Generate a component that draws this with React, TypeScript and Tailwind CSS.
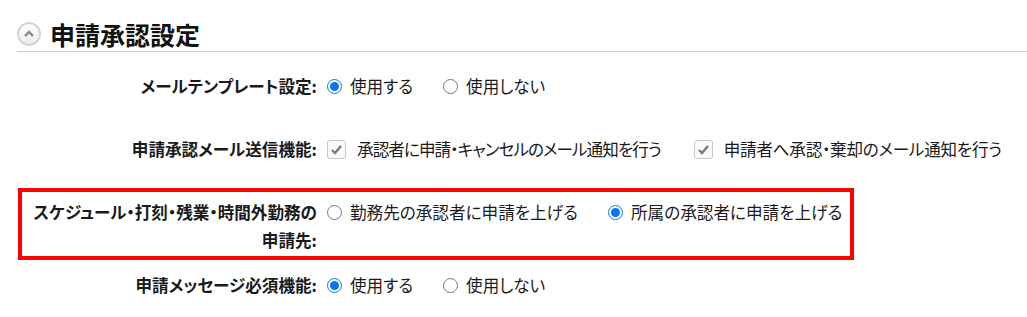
import React from 'react';

const font = { fontFamily: '"Noto Sans CJK JP", "Noto Sans", sans-serif' };

const Radio: React.FC<{ checked?: boolean; label: string; name: string }> = ({ checked, label, name }) => (
    <label className="flex items-center mr-[30px] whitespace-nowrap">
        <input
            type="radio"
            name={name}
            defaultChecked={checked}
            className="w-[15px] h-[15px] m-0 accent-[#0b75f0]"
        />
        <span className="ml-[8px]">{label}</span>
    </label>
);

const Check: React.FC<{ label: string; className?: string }> = ({ label, className }) => (
    <label className="flex items-center mr-[33px] whitespace-nowrap">
        <span className="w-[19px] h-[19px] shrink-0 rounded-[3px] border border-[#c8c8c8] bg-[#fafafa] flex items-center justify-center">
            <svg width="13" height="13" viewBox="0 0 13 13">
                <path d="M2 7 L5 10 L11 3" fill="none" stroke="#7a7a7a" strokeWidth="2.4" />
            </svg>
        </span>
        <span className={`ml-[11px] ${className || ''}`}>{label}</span>
    </label>
);

const Row: React.FC<{ label: React.ReactNode; children: React.ReactNode; className?: string }> = ({ label, children, className }) => (
    <div className={`flex leading-[28px] ${className || ''}`}>
        <div className="w-[300px] shrink-0 text-right font-bold pr-[1px] whitespace-nowrap">{label}</div>
        <div className="flex items-center h-[28px] ml-[9px]">{children}</div>
    </div>
);

export default function App() {
    return (
        <div
            className="w-[1027px] h-[317px] bg-white text-[#1a1a1a] text-[16.6px] overflow-hidden [font-feature-settings:'palt']"
            style={font}
        >
            <div className="pl-[17px] pt-[19px]">
                <div className="flex items-center border-b border-[#cfcfcf] h-[33px] pb-[2px]">
                    <span className="w-[24px] h-[24px] shrink-0 rounded-full border-2 border-[#d4d4d4] bg-gradient-to-b from-[#ffffff] to-[#ececec] flex items-center justify-center">
                        <svg width="14" height="14" viewBox="0 0 14 14">
                            <path d="M3 9 L7 5 L11 9" fill="none" stroke="#888888" strokeWidth="2.4" />
                        </svg>
                    </span>
                    <h2 className="ml-[9px] text-[25px] font-bold leading-[30px] text-[#111] [font-feature-settings:normal]">申請承認設定</h2>
                </div>

                <Row label="メールテンプレート設定:" className="mt-[20px] ml-[1px]">
                    <Radio name="tpl" checked label="使用する" />
                    <Radio name="tpl" label="使用しない" />
                </Row>

                <Row label="申請承認メール送信機能:" className="mt-[35px] ml-[1px]">
                    <Check label="承認者に申請・キャンセルのメール通知を行う" className="tracking-[-0.95px]" />
                    <Check label="申請者へ承認・棄却のメール通知を行う" className="tracking-[-0.25px]" />
                </Row>

                <div className="mt-[25px] ml-[1px] w-[836px] border-4 border-[#ff0000] pt-[6px] pb-[2px]">
                    <div className="flex leading-[28px] -ml-[4px]">
                        <div className="w-[300px] shrink-0 text-right font-bold pr-[1px] whitespace-nowrap">
                            スケジュール・打刻・残業・時間外勤務の<br />申請先:
                        </div>
                        <div className="flex items-center h-[28px] ml-[9px]">
                            <Radio name="dest" label="勤務先の承認者に申請を上げる" />
                            <Radio name="dest" checked label="所属の承認者に申請を上げる" />
                        </div>
                    </div>
                </div>

                <Row label="申請メッセージ必須機能:" className="mt-[11px] ml-[1px]">
                    <Radio name="msg" checked label="使用する" />
                    <Radio name="msg" label="使用しない" />
                </Row>
            </div>
        </div>
    );
}
